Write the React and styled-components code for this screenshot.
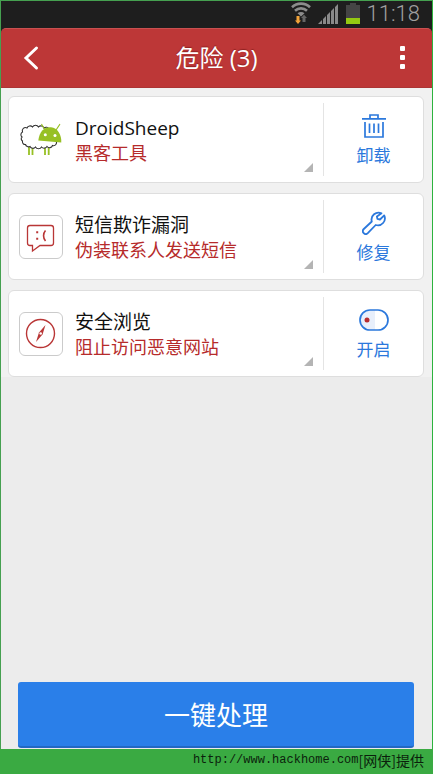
import styled, { createGlobalStyle } from 'styled-components';

const GlobalStyle = createGlobalStyle`
    * {
        box-sizing: border-box;
    }

    body {
        margin: 0;
        background: #ececec;
        font-family: "Open Sans", "Noto Sans CJK SC", sans-serif;
    }

    button {
        border: 0;
        padding: 0;
        background: none;
        font-family: inherit;
        cursor: pointer;
    }

    h1, h2, p {
        margin: 0;
        font-weight: 400;
    }

    svg {
        display: block;
    }
`;

const Screen = styled.div`
    display: flex;
    flex-direction: column;
    min-height: 100vh;
    border: 1px solid #45a050;
    border-bottom: 0;
    border-right-color: #2db33e;
`;

const Top = styled.div`
    background: #1e1e1e;
`;

const StatusBar = styled.div`
    display: flex;
    justify-content: flex-end;
    align-items: center;
    height: 27px;
    padding: 0 12px 2px 0;
    gap: 7px;
`;

const Clock = styled.time`
    color: #a0a0a0;
    font-family: Roboto, sans-serif;
    font-size: 22px;
    font-weight: 300;
    line-height: 24px;
`;

const Header = styled.header`
    display: grid;
    grid-template-columns: 60px 1fr 60px;
    align-items: center;
    height: 60px;
    background: #bd3737;
    border-top: 1px solid #c95050;
    border-bottom: 1px solid #ac3535;
    border-radius: 5px 5px 0 0;
`;

const HeaderButton = styled.button`
    display: flex;
    justify-content: center;
    align-items: center;
    height: 56px;
`;

const Title = styled.h1`
    color: #fff;
    font-size: 24px;
    line-height: 32px;
    text-align: center;
    text-shadow: 0 -1px 1px #8f2222;
`;

const List = styled.main`
    display: flex;
    flex-direction: column;
    gap: 10px;
    padding: 8px 8px 0 7px;
    background: #f1f1f1;
`;

const Card = styled.article`
    display: grid;
    grid-template-columns: 1fr 100px;
    height: 87px;
    padding: 6px 0;
    background: #fff;
    border: 1px solid #dedede;
    border-radius: 6px;
`;

const Info = styled.button`
    position: relative;
    display: flex;
    align-items: center;
    gap: 12px;
    padding-left: 10px;
    text-align: left;
`;

const Corner = styled.span`
    position: absolute;
    right: 10px;
    bottom: 4px;
    width: 9px;
    height: 9px;
    background: #b4b4b4;
    clip-path: polygon(100% 0, 100% 100%, 0 100%);
`;

const IconBox = styled.span`
    display: flex;
    justify-content: center;
    align-items: center;
    width: 44px;
    height: 44px;
    border: ${(props) => (props.$framed ? '1px solid #cbcbcb' : '0')};
    border-radius: 6px;
`;

const Texts = styled.div`
    padding-top: 2px;
`;

const Name = styled.h2`
    color: #111;
    font-size: 19px;
    line-height: 25px;
`;

const Detail = styled.p`
    color: #b62b2b;
    font-size: 18px;
    line-height: 25px;
`;

const Action = styled.button`
    display: flex;
    flex-direction: column;
    justify-content: center;
    align-items: center;
    gap: 6px;
    padding-top: 2px;
    border-left: 1px solid #e4e4e4;
    color: #2b78dc;
    font-size: 17px;
    line-height: 24px;
`;

const Bottom = styled.div`
    margin-top: auto;
    padding: 24px 18px 1px 17px;
`;

const FixButton = styled.button`
    width: 100%;
    height: 66px;
    padding-top: 2px;
    background: #2a7fe9;
    border-bottom: 2px solid #2268c4;
    border-radius: 3px;
    color: #fff;
    font-size: 26px;
    line-height: 36px;
`;

const Credit = styled.footer`
    display: flex;
    justify-content: flex-end;
    height: 25px;
    margin: 0 -1px;
    padding-right: 9px;
    background: #3aaa42;
    color: #0b1f0c;
    font-family: "Liberation Mono", "Noto Sans CJK SC", monospace;
    font-size: 12px;
    line-height: 22px;
`;

const CreditName = styled.span`
    font-family: "Noto Sans CJK SC", sans-serif;
    font-size: 14px;
`;

const WifiIcon = () => (
    <svg width="20" height="23" viewBox="0 0 20 23" fill="none">
        <g stroke="#8c8c8c" strokeWidth="2.6">
            <path d="M1 5.2C6 .4 14 .4 19 5.2" />
            <path d="M4 8.8c3.400-3.200 8.600-3.200 12 0" />
        </g>
        <path d="M10 14.500 6.500 11.200c2-1.700 5-1.700 7 0z" fill="#8c8c8c" />
        <path d="M5.500 14h3v4.500H10L7 22l-3-3.500h1.500z" fill="#f2a33a" />
        <path d="M11.500 20v-4H10l3-3.200 3 3.200h-1.500v4z" fill="#666" />
    </svg>
);

const SignalIcon = () => (
    <svg width="21" height="20" viewBox="0 0 21 20" fill="#8a8a8a">
        <path d="M0 20l4-4v4zM5 15l3-3v8H5zM9 11l3-3v12H9zM13 7l3-3v16h-3zM17 3l3-3v20h-3z" />
    </svg>
);

const BatteryIcon = () => (
    <svg width="14" height="22" viewBox="0 0 14 22">
        <path d="M4 0h6v2h4v13H0V2h4z" fill="#454545" />
        <path d="M0 15h14v6H0z" fill="#94c912" />
    </svg>
);

const BackIcon = () => (
    <svg width="16" height="26" viewBox="0 0 16 26" fill="none" stroke="#fff" strokeWidth="3" strokeLinecap="round">
        <path d="M13.500 3 3 13l10.500 10" />
    </svg>
);

const MoreIcon = () => (
    <svg width="5" height="24" viewBox="0 0 5 24" fill="#fff">
        <rect y="0" width="5" height="5" rx="1" />
        <rect y="9" width="5" height="5" rx="1" />
        <rect y="18" width="5" height="5" rx="1" />
    </svg>
);

const SheepIcon = () => (
    <svg width="44" height="44" viewBox="0 0 44 44" fill="none">
        <path d="M10 28v9M13.500 28v9M26 28v9M29.700 28v9" stroke="#97c024" strokeWidth="1.800" />
        <path
            d="M3 19A3 3 0 0 1 3.500 14A3.200 3.200 0 0 1 8 10A3.300 3.300 0 0 1 13.500 9A3.400 3.400 0 0 1 19.500 9A3.300 3.300 0 0 1 25 10A3.200 3.200 0 0 1 30 11L37 23A3 3 0 0 1 33.500 27.500A3.200 3.200 0 0 1 28 28.500A3.400 3.400 0 0 1 22.500 29A3.400 3.400 0 0 1 16.500 29A3.200 3.200 0 0 1 11 28.500A3.200 3.200 0 0 1 6.500 26.500A2.800 2.800 0 0 1 3.500 23A2.500 2.500 0 0 1 3 19z"
            fill="#fff"
            stroke="#333"
            strokeWidth="1.100"
        />
        <path d="M26 12l-3.300-5.500M36.700 12.500l4-6" stroke="#97c024" strokeWidth="1.200" strokeLinecap="round" />
        <path d="M19.300 22.500C20.500 13 25.500 8.500 32 9.200S42.700 16.500 42.300 24.500z" fill="#97c024" />
        <circle cx="26.300" cy="16.700" r="1.500" fill="#fff" />
        <circle cx="36" cy="17.400" r="1.500" fill="#fff" />
    </svg>
);

const SmsIcon = () => (
    <svg width="42" height="42" viewBox="0 0 42 42" fill="none" stroke="#b93636" strokeWidth="1.300">
        <path d="M10 9.500h21a2.500 2.500 0 0 1 2.500 2.500v15a2.500 2.500 0 0 1-2.500 2.500H20L12.500 35v-5.500H10A2.500 2.500 0 0 1 7.500 27V12A2.500 2.500 0 0 1 10 9.500z" />
        <path d="M25.500 14.500c-2.600 3-2.600 7.500 0 10.500" strokeWidth="1.600" />
        <path d="M16.200 15.200h2v2h-2zM16.200 21.700h2v2h-2z" fill="#b93636" stroke="none" />
    </svg>
);

const CompassIcon = () => (
    <svg width="42" height="42" viewBox="0 0 42 42" fill="none" stroke="#b93636" strokeWidth="1.400">
        <circle cx="20.500" cy="20.500" r="14" />
        <path d="M25.500 12l-3 9.500-6.500 7.500 3-9.500z" fill="#b93636" stroke="none" />
        <circle cx="20.700" cy="20.500" r="1.300" fill="#fff" stroke="none" />
    </svg>
);

const TrashIcon = () => (
    <svg width="24" height="24" viewBox="0 0 24 24" fill="none" stroke="#2b78dc" strokeWidth="1.700">
        <path d="M0 4.800h24M8 4.500V1h8v3.500M3 8v15h18V8" />
        <path d="M7.500 9.500v9.500M12 9.500v9.500M16.500 9.500v9.500" />
    </svg>
);

const WrenchIcon = () => (
    <svg width="24" height="24" viewBox="0 0 24 24" fill="none" stroke="#2b78dc" strokeWidth="1.800" strokeLinejoin="round">
        <path d="M19.500 2.300a7 7 0 0 0-9.700 8.200L1.800 18a2.800 2.800 0 0 0 4 4.200l7.900-8.200a7 7 0 0 0 8.500-9.600L18 8.500l-2.600-.6-.5-2.300z" />
    </svg>
);

const ToggleIcon = () => (
    <svg width="30" height="24" viewBox="0 0 30 24" fill="none">
        <rect x="1" y="2" width="28" height="20" rx="10" fill="#fff" />
        <path d="M11 2h5v20h-5a10 10 0 0 1 0-20z" fill="#e8effb" />
        <rect x="1" y="2" width="28" height="20" rx="10" stroke="#2b78dc" strokeWidth="1.700" />
        <circle cx="8" cy="12" r="2.500" fill="#b82c30" />
    </svg>
);

const risks = [
    {
        name: 'DroidSheep',
        detail: '黑客工具',
        icon: <SheepIcon />,
        framed: false,
        action: '卸载',
        actionIcon: <TrashIcon />,
    },
    {
        name: '短信欺诈漏洞',
        detail: '伪装联系人发送短信',
        icon: <SmsIcon />,
        framed: true,
        action: '修复',
        actionIcon: <WrenchIcon />,
    },
    {
        name: '安全浏览',
        detail: '阻止访问恶意网站',
        icon: <CompassIcon />,
        framed: true,
        action: '开启',
        actionIcon: <ToggleIcon />,
    },
];

const RiskCard = ({ name, detail, icon, framed, action, actionIcon }) => {
    return (
        <Card>
            <Info type="button">
                <IconBox $framed={framed}>{icon}</IconBox>
                <Texts>
                    <Name>{name}</Name>
                    <Detail>{detail}</Detail>
                </Texts>
                <Corner />
            </Info>
            <Action type="button">
                {actionIcon}
                {action}
            </Action>
        </Card>
    );
};

const App = () => {
    return (
        <>
            <GlobalStyle />
            <Screen>
                <Top>
                    <StatusBar>
                        <WifiIcon />
                        <SignalIcon />
                        <BatteryIcon />
                        <Clock>11:18</Clock>
                    </StatusBar>
                    <Header>
                        <HeaderButton type="button" aria-label="返回">
                            <BackIcon />
                        </HeaderButton>
                        <Title>危险 ({risks.length})</Title>
                        <HeaderButton type="button" aria-label="更多">
                            <MoreIcon />
                        </HeaderButton>
                    </Header>
                </Top>
                <List>
                    {risks.map((risk) => (
                        <RiskCard key={risk.name} {...risk} />
                    ))}
                </List>
                <Bottom>
                    <FixButton type="button">一键处理</FixButton>
                </Bottom>
                <Credit>
                    http://www.hackhome.com
                    <CreditName>[网侠]提供</CreditName>
                </Credit>
            </Screen>
        </>
    );
};

export default App;
